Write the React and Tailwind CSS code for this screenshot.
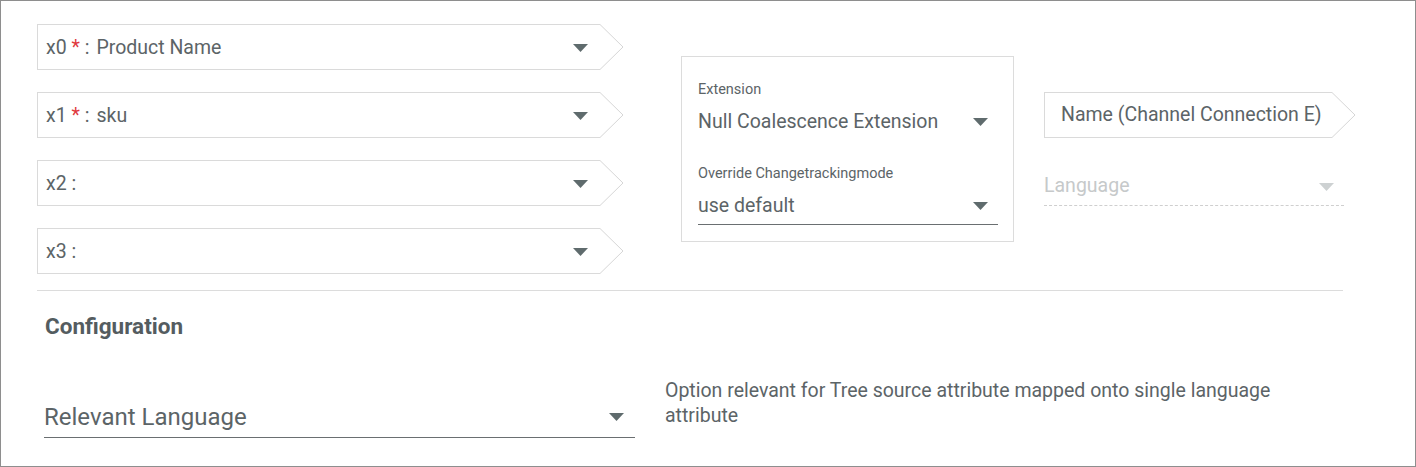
import React from "react";

function Caret({ color = "#5f6b6d", className = "" }) {
  return (
    <svg width="15" height="8" viewBox="0 0 15 8" className={className}>
      <polygon points="0,0 15,0 7.5,8" fill={color} />
    </svg>
  );
}

function Chevron({ h = 46 }) {
  return (
    <svg width="24" height={h} viewBox={`0 0 24 ${h}`} className="shrink-0 block">
      <polyline
        points={`0,0.5 23,${h / 2} 0,${h - 0.5}`}
        fill="none"
        stroke="#d6d6d6"
        strokeWidth="1"
      />
    </svg>
  );
}

function MapRow({ name, required, value }) {
  return (
    <div className="flex h-[46px]">
      <div className="w-[563px] h-[46px] border-l border-t border-b border-[#dadada] flex items-center pl-[8px] pr-[12px] pt-[2px]">
        <span className="text-[19.5px] leading-[24px] text-[#5c6467] whitespace-pre">
          {name}
          {required ? (
            <>
              {" "}
              <span className="text-[#e0393e]">*</span>
            </>
          ) : null}
          {" :"}
          {value ? <span className="ml-[7px]">{value}</span> : null}
        </span>
        <div className="flex-1" />
        <Caret className="-mt-[1px]" />
      </div>
      <Chevron />
    </div>
  );
}

export default function App() {
  return (
    <div className="w-[1416px] h-[467px] border border-[#8e8e8e] bg-white box-border font-['Roboto',sans-serif] text-[#5c6467] overflow-hidden">
      <div className="pl-[36px] pt-[23px]">
        <div className="flex items-start">
          <div className="flex flex-col gap-[22px] w-[587px]">
            <MapRow name="x0" required value="Product Name" />
            <MapRow name="x1" required value="sku" />
            <MapRow name="x2" />
            <MapRow name="x3" />
          </div>

          <div className="ml-[57px] mt-[32px] w-[333px] h-[186px] border border-[#dcdcdc] pl-[16px] pr-[15px] pt-[25px]">
            <div className="text-[14.5px] leading-[16px] text-[#5c6467]">Extension</div>
            <div className="mt-[12px] h-[24px] flex items-center pr-[10px]">
              <span className="text-[19.5px] leading-[24px] whitespace-nowrap">Null Coalescence Extension</span>
              <div className="flex-1" />
              <Caret />
            </div>
            <div className="mt-[32px] text-[14.5px] leading-[16px] text-[#5c6467]">
              Override Changetrackingmode
            </div>
            <div className="mt-[12px] pb-[6px] border-b border-[#6a6f71]">
              <div className="h-[24px] flex items-center pr-[10px]">
                <span className="text-[19.5px] leading-[24px]">use default</span>
                <div className="flex-1" />
                <Caret />
              </div>
            </div>
          </div>

          <div className="ml-[30px] mt-[68px] flex flex-col">
            <div className="flex h-[46px]">
              <div className="w-[288px] h-[46px] border-l border-t border-b border-[#dadada] flex items-center pl-[16px]">
                <span className="text-[19.5px] leading-[24px] whitespace-nowrap">
                  Name (Channel Connection E)
                </span>
              </div>
              <Chevron />
            </div>
            <div className="mt-[36px] w-[300px] h-[32px] border-b border-dashed border-[#cfcfcf] flex items-start pr-[10px]">
              <span className="text-[19.5px] leading-[24px] text-[#c6c9ca]">Language</span>
              <div className="flex-1" />
              <Caret color="#cdd1d2" className="mt-[9px]" />
            </div>
          </div>
        </div>

        <div className="mt-[16px] w-[1306px] h-px bg-[#dcdcdc]" />

        <div className="pl-[8px] mt-[23px] text-[22.5px] leading-[24px] font-bold text-[#545c60]">
          Configuration
        </div>

        <div className="flex items-start mt-[40px] pl-[7px]">
          <div className="mt-[24px] w-[591px] pb-[5px] border-b border-[#6a6f71]">
            <div className="h-[30px] flex items-center pr-[11px]">
              <span className="text-[24px] leading-[30px] text-[#5c6467]">Relevant Language</span>
              <div className="flex-1" />
              <Caret />
            </div>
          </div>
          <div className="ml-[30px] w-[650px] text-[19.5px] leading-[25px] text-[#5c6467]">
            Option relevant for Tree source attribute mapped onto single language attribute
          </div>
        </div>
      </div>
    </div>
  );
}
